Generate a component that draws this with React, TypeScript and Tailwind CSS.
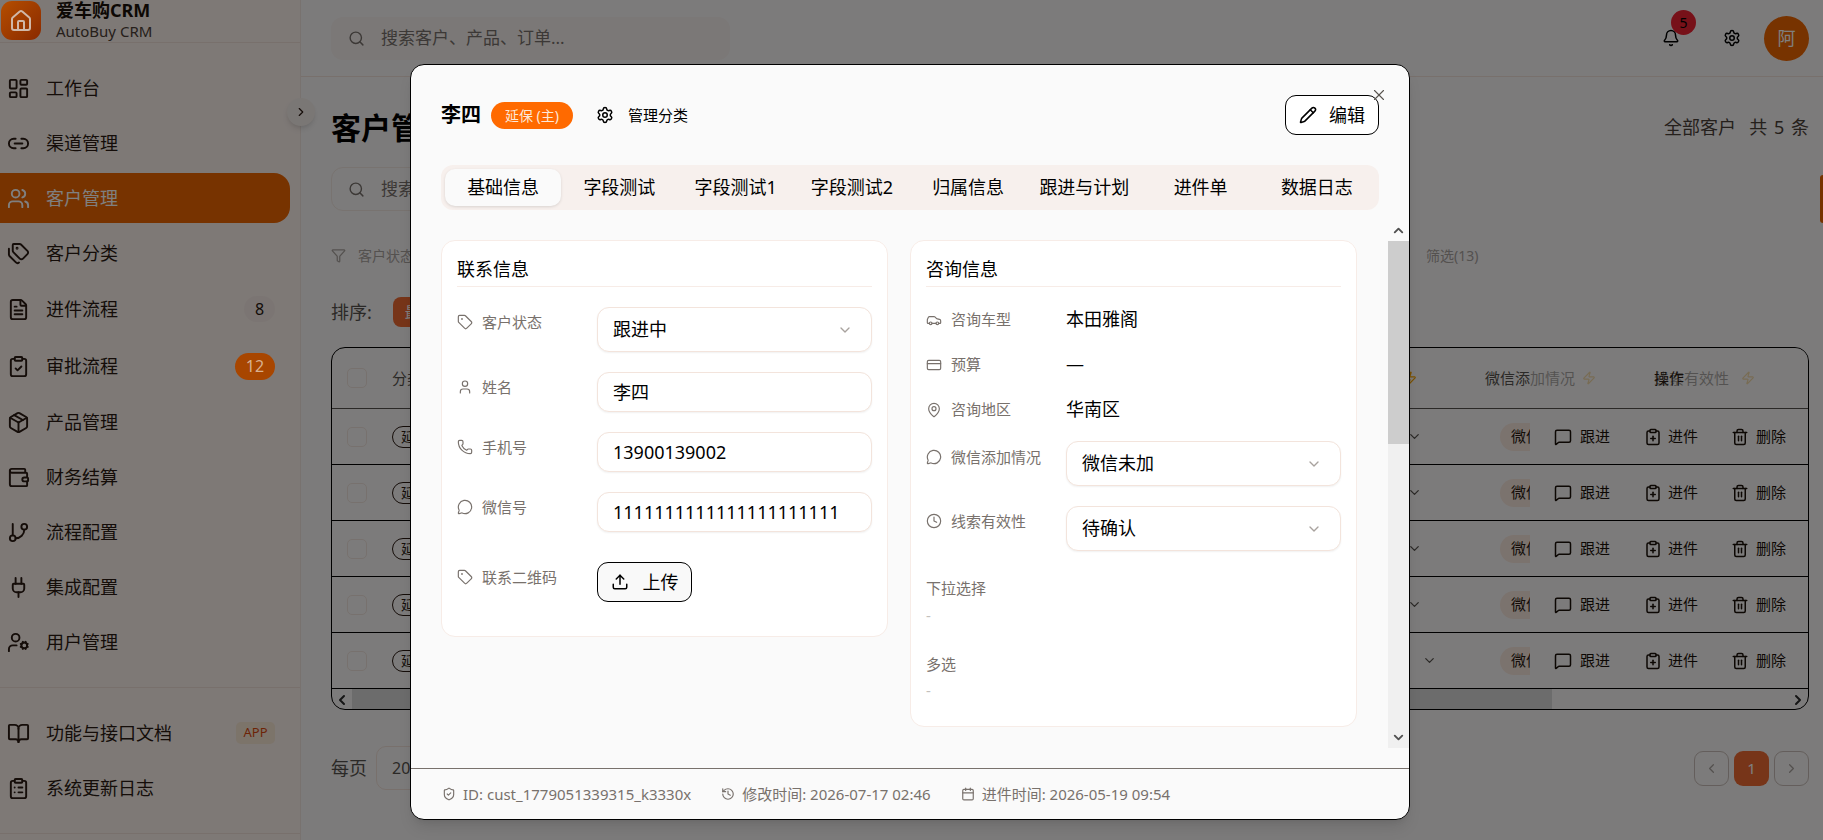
import React from 'react';
import {
  House, LayoutDashboard, Link2, Users, Tags, FileText, ClipboardCheck, Package, Wallet, GitBranch, Plug, UserCog,
  BookOpen, ClipboardList, Search, Bell, Settings, ChevronRight, ChevronLeft, ChevronDown, ChevronUp, Funnel, Zap,
  MessageSquare, ClipboardPlus, Trash2, Pencil, X, Tag, User, Phone, MessageCircle, Upload, Car, CreditCard, MapPin,
  Clock, ShieldCheck, History, Calendar,
} from 'lucide-react';

const nav = [
  { label: '工作台', Icon: LayoutDashboard },
  { label: '渠道管理', Icon: Link2 },
  { label: '客户管理', Icon: Users, active: true },
  { label: '客户分类', Icon: Tags },
  { label: '进件流程', Icon: FileText, soft: '8' },
  { label: '审批流程', Icon: ClipboardCheck, strong: '12' },
  { label: '产品管理', Icon: Package },
  { label: '财务结算', Icon: Wallet },
  { label: '流程配置', Icon: GitBranch },
  { label: '集成配置', Icon: Plug },
  { label: '用户管理', Icon: UserCog },
];

function NavItem({ item }: { item: (typeof nav)[number] }) {
  const { Icon } = item;
  const tall = item.soft || item.strong;
  return (
    <div
      className={`flex w-[290px] items-center gap-[16px] rounded-r-[16px] pl-[7px] pr-[15px] text-[18px] ${tall ? 'h-[52px]' : 'h-[50px]'} ${
        item.active ? 'bg-[#ee6600] text-white' : 'text-[#2a1a12]'
      }`}
    >
      <Icon size={23} strokeWidth={2} />
      <span className="flex-1 leading-none">{item.label}</span>
      {item.soft && (
        <span className="flex h-[26px] w-[31px] items-center justify-center rounded-full bg-[#f7ebe6] text-[16px]">{item.soft}</span>
      )}
      {item.strong && (
        <span className="relative z-50 flex h-[27px] w-[40px] items-center justify-center rounded-full bg-[#a84600] text-[16px] text-[#d8b090]">
          {item.strong}
        </span>
      )}
    </div>
  );
}

function Sidebar() {
  return (
    <aside className="flex h-full w-[301px] shrink-0 flex-col border-r border-r-[#f0e4de] bg-[#fcf2ed]">
      <div className="flex h-[43px] shrink-0 items-start gap-[15px] border-b border-b-[#f0e0d8] pl-[1px] pt-[1px]">
        <div className="relative z-50 flex h-[39px] w-[40px] items-center justify-center rounded-[11px] bg-gradient-to-br from-[#b54e00] to-[#8a2a00] text-[#d0b8a8]">
          <House size={24} />
        </div>
        <div className="-mt-[3px] flex flex-col">
          <span className="text-[18px] font-bold leading-[24px] text-[#1a1008]">爱车购CRM</span>
          <span className="text-[15px] leading-[18px] text-[#4c4036]">AutoBuy CRM</span>
        </div>
      </div>
      <nav className="flex flex-col gap-[5px] border-b border-b-[#f0e0d8] pb-[20px] pt-[20px]">
        {nav.map((n) => (
          <NavItem key={n.label} item={n} />
        ))}
      </nav>
      <div className="flex flex-col gap-[5px] border-b border-b-[#f0e0d8] pb-[20px] pt-[20px]">
        <div className="flex h-[50px] w-[290px] items-center gap-[16px] pl-[7px] pr-[15px] text-[18px] text-[#2a1a12]">
          <BookOpen size={23} />
          <span className="flex-1">功能与接口文档</span>
          <span className="flex h-[22px] w-[39px] items-center justify-center rounded-[5px] bg-[#f9e8d4] text-[13px] text-[#d9480f]">APP</span>
        </div>
        <div className="flex h-[50px] w-[290px] items-center gap-[16px] pl-[7px] pr-[15px] text-[18px] text-[#2a1a12]">
          <ClipboardList size={23} />
          <span className="flex-1">系统更新日志</span>
        </div>
      </div>
    </aside>
  );
}

function TableRow({ wide }: { wide?: boolean }) {
  return (
    <div className="relative flex h-[56px] items-center border-b pl-[15px]">
      <div className="h-[20px] w-[20px] rounded-[5px] border border-[#efe3dc]" />
      <div className="ml-[25px] flex h-[22px] w-[60px] items-center rounded-full border pl-[8px] text-[14px] text-[#2a1a12]">延保</div>
      <div className={`absolute text-[#57534e] ${wide ? 'left-[1090px]' : 'left-[1075px]'}`}>
        <ChevronDown size={15} />
      </div>
      <div className="absolute left-[1168px] flex h-[28px] w-[60px] items-center rounded-full bg-[#f7e6dc] pl-[11px] text-[15px] text-[#2a1a12]">
        微信
      </div>
      <div className="absolute bottom-0 right-0 top-0 flex w-[278px] items-center bg-[#f9f7f7] pl-[24px] text-[15px] text-[#1a1008]">
        <MessageSquare size={18} />
        <span className="ml-[8px] w-[64px]">跟进</span>
        <ClipboardPlus size={18} />
        <span className="ml-[6px] w-[63px]">进件</span>
        <Trash2 size={18} />
        <span className="ml-[7px]">删除</span>
      </div>
    </div>
  );
}

function MainPage() {
  return (
    <main className="flex h-full min-w-0 flex-1 flex-col bg-[#f9f7f7]">
      <header className="flex h-[77px] shrink-0 items-center border-b border-b-[#f0e0d8] pl-[30px] pr-[14px]">
        <div className="flex h-[43px] w-[399px] items-center gap-[16px] rounded-[12px] bg-[#f6f0ee] pl-[17px] text-[#78716c]">
          <Search size={17} />
          <span className="text-[17px]">搜索客户、产品、订单...</span>
        </div>
        <div className="ml-auto flex items-center">
          <div className="relative mr-[43px] text-black">
            <Bell size={18} />
            <span className="absolute -right-[16px] -top-[19px] flex h-[25px] w-[25px] items-center justify-center rounded-full bg-[#ef2233] text-[14px] text-black">5</span>
          </div>
          <Settings size={18} className="mr-[23px] text-black" />
          <div className="flex h-[45px] w-[45px] items-center justify-center rounded-full bg-[#ee6600] text-[18px] text-white">阿</div>
        </div>
      </header>
      <div className="relative flex flex-1 flex-col pl-[30px] pr-[14px]">
        <div className="mt-[30px] flex h-[40px] items-center justify-between">
          <h1 className="text-[30px] font-bold text-black">客户管理</h1>
          <span className="text-[18px] text-[#4a4038] [word-spacing:2px]">全部客户 &nbsp;共 5 条</span>
        </div>
        <div className="mt-[20px] flex h-[44px] w-[900px] items-center gap-[16px] rounded-[12px] border border-[#f0e6e0] pl-[16px] text-[#78716c]">
          <Search size={17} />
          <span className="text-[17px]">搜索客户、产品、订单</span>
        </div>
        <div className="mt-[34px] flex h-[20px] items-center gap-[12px] text-[14px] text-[#a8a29e]">
          <Funnel size={15} />
          <span>客户状态</span>
          <span className="ml-[1000px]">筛选(13)</span>
        </div>
        <div className="mt-[32px] flex h-[30px] items-center gap-[21px] text-[18px] text-[#57534e]">
          <span>排序:</span>
          <span className="flex h-[30px] w-[80px] items-center rounded-[8px] bg-[#ee6a33] px-[12px] text-[15px] text-white">最新</span>
        </div>
        <div className="relative mt-[20px] h-[363px] overflow-hidden rounded-[14px] border">
          <div className="relative flex h-[61px] items-center border-b pl-[15px] text-[15px] text-[#57534e]">
            <div className="h-[20px] w-[20px] rounded-[5px] border border-[#efe3dc]" />
            <span className="ml-[25px]">分类</span>
            <Zap size={14} className="absolute left-[1071px] text-[#f5a300]" />
            <span className="absolute left-[1153px]">微信添加情况</span>
            <Zap size={14} className="absolute left-[1250px] text-[#e8b858]" />
            <span className="absolute left-[1322px]">线索有效性</span>
            <Zap size={14} className="absolute left-[1409px] text-[#e8b858]" />
            <div className="absolute bottom-0 right-0 top-0 flex w-[278px] items-center bg-[#f9f7f7]/50 pl-[124px] text-[#2a1a12]">操作</div>
          </div>
          <TableRow />
          <TableRow />
          <TableRow />
          <TableRow />
          <TableRow wide />
          <div className="flex h-[21px] items-center justify-between text-[#2a2a2a]">
            <div className="flex h-full flex-1 items-center">
              <ChevronLeft size={16} strokeWidth={3} className="mx-[2px]" />
              <div className="h-full w-[1200px] bg-[#d8d8d8]" />
            </div>
            <ChevronRight size={16} strokeWidth={3} className="mx-[2px]" />
          </div>
        </div>
        <div className="mt-[36px] flex items-start">
          <span className="mt-[9px] text-[18px] text-[#57534e]">每页</span>
          <div className="ml-[9px] flex h-[44px] w-[100px] items-center rounded-[10px] border border-[#f0e0d8] pl-[15px] text-[16px] text-[#57534e]">20</div>
          <div className="ml-auto mt-[5px] flex gap-[5px]">
            <div className="flex h-[35px] w-[35px] items-center justify-center rounded-[9px] border border-[#c8bdb8] text-[#a8a29e]">
              <ChevronLeft size={15} />
            </div>
            <div className="flex h-[35px] w-[35px] items-center justify-center rounded-[9px] bg-[#ee6a33] text-[15px] text-white">1</div>
            <div className="flex h-[35px] w-[35px] items-center justify-center rounded-[9px] border border-[#c8bdb8] text-[#a8a29e]">
              <ChevronRight size={15} />
            </div>
          </div>
        </div>
      </div>
    </main>
  );
}

function FieldLabel({ Icon, children }: { Icon: React.ComponentType<{ size?: number; strokeWidth?: number }>; children: React.ReactNode }) {
  return (
    <div className="flex h-[20px] w-[140px] shrink-0 items-center gap-[9px] text-[15px] text-[#78716c]">
      <Icon size={16} strokeWidth={1.75} />
      <span>{children}</span>
    </div>
  );
}

function SelectBox({ value }: { value: string }) {
  return (
    <div className="flex h-[45px] flex-1 items-center justify-between rounded-[12px] border border-[#f3e4dc] bg-white pl-[15px] pr-[18px] text-[18px] text-black shadow-[0_1px_2px_rgba(0,0,0,0.06)]">
      <span>{value}</span>
      <ChevronDown size={16} className="text-[#a8a29e]" />
    </div>
  );
}

function InputBox({ value }: { value: string }) {
  return (
    <div className="flex h-[40px] flex-1 items-center rounded-[12px] border border-[#f3e4dc] bg-white pl-[15px] text-[18px] text-black shadow-[0_1px_2px_rgba(0,0,0,0.06)]">
      {value}
    </div>
  );
}

const tabs = ['基础信息', '字段测试', '字段测试1', '字段测试2', '归属信息', '跟进与计划', '进件单', '数据日志'];

function Modal() {
  return (
    <div className="absolute left-[410px] top-[64px] z-50 flex h-[756px] w-[1000px] flex-col overflow-hidden rounded-[14px] border bg-[#fafafa] text-black shadow-lg">
      <div className="relative flex h-[100px] shrink-0 items-start justify-between pl-[30px] pr-[30px] pt-[30px]">
        <div className="flex h-[40px] items-center">
          <span className="text-[20px] font-bold">李四</span>
          <span className="ml-[10px] flex h-[27px] w-[82px] items-center justify-center rounded-full bg-[#ff6a00] text-[14px] text-[#fde8d8]">延保 (主)</span>
          <Settings size={18} className="ml-[23px]" />
          <span className="ml-[14px] text-[15px]">管理分类</span>
        </div>
        <div className="flex h-[40px] w-[94px] items-center justify-center gap-[12px] rounded-[11px] border bg-white text-[18px]">
          <Pencil size={18} />
          <span>编辑</span>
        </div>
        <X size={18} strokeWidth={1.5} className="absolute right-[21px] top-[21px] text-[#57534e]" />
      </div>
      <div className="ml-[30px] mr-[30px] grid h-[45px] shrink-0 grid-cols-8 rounded-[12px] bg-[#f7f0ed] p-[4px] text-[18px]">
        {tabs.map((t, i) => (
          <div
            key={t}
            className={`flex items-center justify-center rounded-[10px] ${i === 0 ? 'bg-[#fafafa] shadow-[0_1px_3px_rgba(0,0,0,0.12)]' : ''}`}
          >
            {t}
          </div>
        ))}
      </div>
      <div className="mt-[10px] flex h-[528px] shrink-0">
        <div className="grid flex-1 grid-cols-2 items-start gap-[22px] overflow-hidden pb-[20px] pl-[30px] pr-[31px] pt-[20px]">
          <section className="h-[397px] rounded-[14px] border border-[#f7ece7] bg-white px-[15px] pt-[15px]">
            <h3 className="h-[31px] border-b border-b-[#f7ece7] text-[18px] leading-[26px]">联系信息</h3>
            <div className="mt-[20px] flex flex-col gap-[20px]">
              <div className="flex items-start">
                <div className="pt-[5px]"><FieldLabel Icon={Tag}>客户状态</FieldLabel></div>
                <SelectBox value="跟进中" />
              </div>
              <div className="flex items-start">
                <div className="pt-[5px]"><FieldLabel Icon={User}>姓名</FieldLabel></div>
                <InputBox value="李四" />
              </div>
              <div className="flex items-start">
                <div className="pt-[5px]"><FieldLabel Icon={Phone}>手机号</FieldLabel></div>
                <InputBox value="13900139002" />
              </div>
              <div className="flex items-start">
                <div className="pt-[5px]"><FieldLabel Icon={MessageCircle}>微信号</FieldLabel></div>
                <InputBox value="1111111111111111111111" />
              </div>
              <div className="mt-[10px] flex items-start">
                <div className="pt-[5px]"><FieldLabel Icon={Tag}>联系二维码</FieldLabel></div>
                <div className="flex h-[40px] w-[95px] items-center justify-center gap-[14px] rounded-[11px] border bg-[#f9f9f9] text-[18px]">
                  <Upload size={18} />
                  <span>上传</span>
                </div>
              </div>
            </div>
          </section>
          <section className="h-[487px] rounded-[14px] border border-[#f7ece7] bg-white px-[15px] pt-[15px]">
            <h3 className="h-[31px] border-b border-b-[#f7ece7] text-[18px] leading-[26px]">咨询信息</h3>
            <div className="mt-[20px] flex flex-col">
              <div className="flex h-[25px] items-center">
                <FieldLabel Icon={Car}>咨询车型</FieldLabel>
                <span className="text-[18px]">本田雅阁</span>
              </div>
              <div className="mt-[20px] flex h-[25px] items-center">
                <FieldLabel Icon={CreditCard}>预算</FieldLabel>
                <span className="text-[18px]">—</span>
              </div>
              <div className="mt-[20px] flex h-[25px] items-center">
                <FieldLabel Icon={MapPin}>咨询地区</FieldLabel>
                <span className="text-[18px]">华南区</span>
              </div>
              <div className="mt-[19px] flex items-start">
                <div className="pt-[6px]"><FieldLabel Icon={MessageCircle}>微信添加情况</FieldLabel></div>
                <SelectBox value="微信未加" />
              </div>
              <div className="mt-[20px] flex items-start">
                <div className="pt-[5px]"><FieldLabel Icon={Clock}>线索有效性</FieldLabel></div>
                <SelectBox value="待确认" />
              </div>
              <div className="mt-[27px] h-[20px] text-[15px] leading-[20px] text-[#78716c]">下拉选择</div>
              <div className="mt-[7px] h-[20px] text-[15px] leading-[20px] text-[#c4c0bc]">-</div>
              <div className="mt-[29px] h-[20px] text-[15px] leading-[20px] text-[#78716c]">多选</div>
              <div className="mt-[6px] h-[20px] text-[15px] leading-[20px] text-[#c4c0bc]">-</div>
            </div>
          </section>
        </div>
        <div className="flex w-[21px] shrink-0 flex-col bg-[#f0f0f0] text-[#505050]">
          <div className="flex h-[21px] items-center justify-center bg-[#fafafa]">
            <ChevronUp size={15} strokeWidth={3} />
          </div>
          <div className="h-[203px] bg-[#cdcdcd]" />
          <div className="flex-1" />
          <div className="flex h-[21px] items-center justify-center">
            <ChevronDown size={15} strokeWidth={3} />
          </div>
        </div>
      </div>
      <footer className="mt-[20px] flex flex-1 items-center border-t pl-[31px] text-[15px] text-[#78716c]">
        <ShieldCheck size={14} />
        <span className="ml-[7px]">ID: cust_1779051339315_k3330x</span>
        <History size={14} className="ml-[30px]" />
        <span className="ml-[7px]">修改时间: 2026-07-17 02:46</span>
        <Calendar size={14} className="ml-[30px]" />
        <span className="ml-[7px]">进件时间: 2026-05-19 09:54</span>
      </footer>
    </div>
  );
}

export default function App() {
  return (
    <div className="relative flex h-[840px] w-[1823px] overflow-hidden font-['Noto_Sans','Noto_Sans_CJK_SC',sans-serif]">
      <Sidebar />
      <div className="absolute left-[287px] top-[98px] flex h-[28px] w-[28px] items-center justify-center rounded-full bg-[#f5eeea] text-[#2a1a12] shadow-md">
        <ChevronRight size={14} />
      </div>
      <MainPage />
      <div className="absolute right-0 top-[175px] h-[48px] w-[3px] rounded-l bg-[#ee6600]" />
      <div className="absolute inset-0 z-40 bg-black/50" />
      <Modal />
    </div>
  );
}
